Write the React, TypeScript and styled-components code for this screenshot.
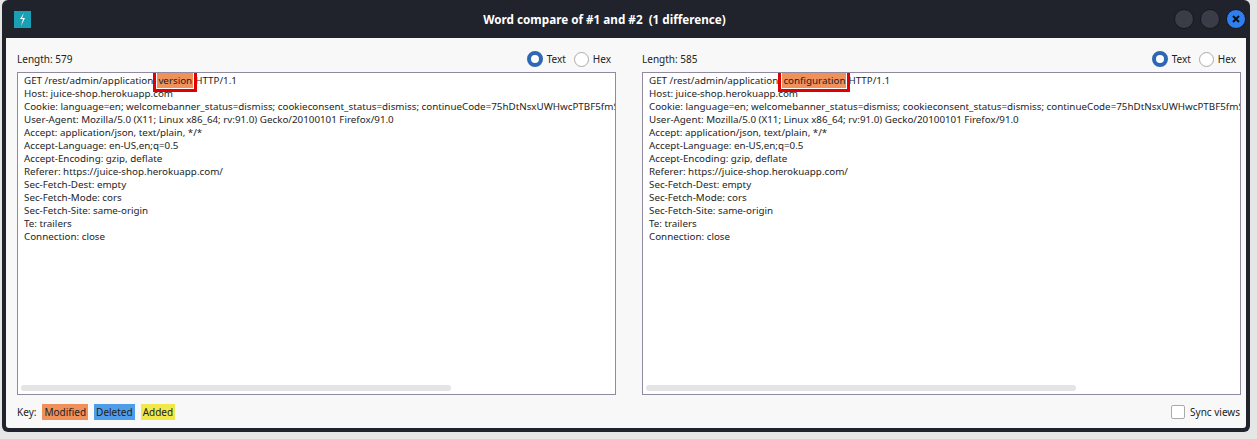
import React from "react";
import styled, { createGlobalStyle } from "styled-components";

const Global = createGlobalStyle`
  html, body { margin: 0; padding: 0; background: #e6e6e6; }
  body { width: 1257px; height: 439px; overflow: hidden; font-family: "Noto Sans", "DejaVu Sans", sans-serif; }
`;

const Frame = styled.div`
  margin: 0 7px 0 2px;
  height: 432px;
  background: #20232b;
  border-radius: 6px;
  display: flex;
  flex-direction: column;
  padding: 0 4px 4px 4px;
  box-sizing: border-box;
`;

const TitleBar = styled.div`
  height: 38px;
  display: flex;
  align-items: center;
`;

const AppIcon = styled.div`
  width: 17px;
  height: 17px;
  background: #1aa0b5;
  margin-left: 8px;
  display: flex;
  align-items: center;
  justify-content: center;
`;

const Title = styled.div`
  flex: 1;
  text-align: center;
  color: #ffffff;
  font-weight: 700;
  font-size: 11.7px;
  padding-left: 4px;
`;

const Controls = styled.div`
  display: flex;
  gap: 6px;
  margin-right: 0px;
`;

const Dot = styled.div<{ $close?: boolean }>`
  width: 18px;
  height: 18px;
  border-radius: 50%;
  background: ${(p) => (p.$close ? "#2f7ff0" : "#3a3d47")};
  border: 1px solid #15171c;
  display: flex;
  align-items: center;
  justify-content: center;
`;

const Body = styled.div`
  flex: 1;
  background: #f8f8f8;
  display: flex;
  flex-direction: column;
  padding: 10px 11px 0 11px;
  border-bottom-left-radius: 3px;
  border-bottom-right-radius: 3px;
`;

const Panes = styled.div`
  display: flex;
  gap: 26px;
`;

const Pane = styled.div`
  width: 599px;
  display: flex;
  flex-direction: column;
`;

const PaneHead = styled.div`
  height: 22px;
  display: flex;
  align-items: center;
  justify-content: space-between;
  font-size: 10px;
  color: #222;
`;

const Radios = styled.div`
  display: flex;
  align-items: center;
  gap: 4px;
  margin-right: 5px;
`;

const Radio = styled.span<{ $on?: boolean }>`
  width: ${(p) => (p.$on ? "8px" : "13px")};
  height: ${(p) => (p.$on ? "8px" : "13px")};
  border-radius: 50%;
  border: ${(p) => (p.$on ? "4px solid #2f67b5" : "1px solid #aaa")};
  background: #fff;
  display: inline-block;
  margin-left: 4px;
`;

const TextBox = styled.div`
  margin-top: 2px;
  height: 323px;
  background: #fff;
  border: 1px solid #8f8aa0;
  position: relative;
  padding: 1px 0 0 6px;
  box-sizing: border-box;
  overflow: hidden;
  font-size: 9.8px;
  line-height: 13px;
  color: #1e1e1e;
  white-space: nowrap;
`;

const Scroll = styled.div`
  position: absolute;
  left: 3px;
  bottom: 3px;
  width: 430px;
  height: 6px;
  border-radius: 3px;
  background: #e4e4e4;
`;

const Diff = styled.span`
  background: #f0905a;
  outline: 3px solid #e00000;
  outline-offset: 1px;
  padding: 1px 1px;
  margin: 0 2px 0 1px;
`;

const Footer = styled.div`
  height: 33px;
  display: flex;
  align-items: center;
  font-size: 10px;
  color: #222;
  gap: 4px;
`;

const Tag = styled.span<{ $bg: string }>`
  background: ${(p) => p.$bg};
  padding: 1px 2px;
  margin-left: 2px;
`;

const Sync = styled.label`
  margin-left: auto;
  display: flex;
  align-items: center;
  gap: 5px;
  margin-right: -5px;
`;

const Box = styled.span`
  width: 12px;
  height: 12px;
  border: 1px solid #aaa;
  border-radius: 2px;
  background: #fff;
`;

const common = [
  "Host: juice-shop.herokuapp.com",
  "Cookie: language=en; welcomebanner_status=dismiss; cookieconsent_status=dismiss; continueCode=75hDtNsxUWHwcPTBF5fmS9",
  "User-Agent: Mozilla/5.0 (X11; Linux x86_64; rv:91.0) Gecko/20100101 Firefox/91.0",
  "Accept: application/json, text/plain, */*",
  "Accept-Language: en-US,en;q=0.5",
  "Accept-Encoding: gzip, deflate",
  "Referer: https://juice-shop.herokuapp.com/",
  "Sec-Fetch-Dest: empty",
  "Sec-Fetch-Mode: cors",
  "Sec-Fetch-Site: same-origin",
  "Te: trailers",
  "Connection: close",
];

function PaneView({ length, word }: { length: number; word: string }) {
  return (
    <Pane>
      <PaneHead>
        <span>Length: {length}</span>
        <Radios>
          <Radio $on /> Text <Radio /> Hex
        </Radios>
      </PaneHead>
      <TextBox>
        <div>
          GET /rest/admin/application-<Diff>{word}</Diff>HTTP/1.1
        </div>
        {common.map((l) => (
          <div key={l}>{l}</div>
        ))}
        <Scroll />
      </TextBox>
    </Pane>
  );
}

export default function App() {
  return (
    <>
      <Global />
      <Frame>
        <TitleBar>
          <AppIcon>
            <svg width="9" height="13" viewBox="0 0 9 13">
              <path d="M6 0 L2 6 L5 6 L3 13 L7 5 L4 5 Z" fill="#fff" />
            </svg>
          </AppIcon>
          <Title>Word compare of #1 and #2&nbsp; (1 difference)</Title>
          <Controls>
            <Dot />
            <Dot />
            <Dot $close>
              <svg width="8" height="8" viewBox="0 0 8 8">
                <path d="M1 1 L7 7 M7 1 L1 7" stroke="#111" strokeWidth="2" />
              </svg>
            </Dot>
          </Controls>
        </TitleBar>
        <Body>
          <Panes>
            <PaneView length={579} word="version" />
            <PaneView length={585} word="configuration" />
          </Panes>
          <Footer>
            Key:
            <Tag $bg="#f0905a">Modified</Tag>
            <Tag $bg="#4f9de8">Deleted</Tag>
            <Tag $bg="#f3e84a">Added</Tag>
            <Sync>
              <Box /> Sync views
            </Sync>
          </Footer>
        </Body>
      </Frame>
    </>
  );
}
